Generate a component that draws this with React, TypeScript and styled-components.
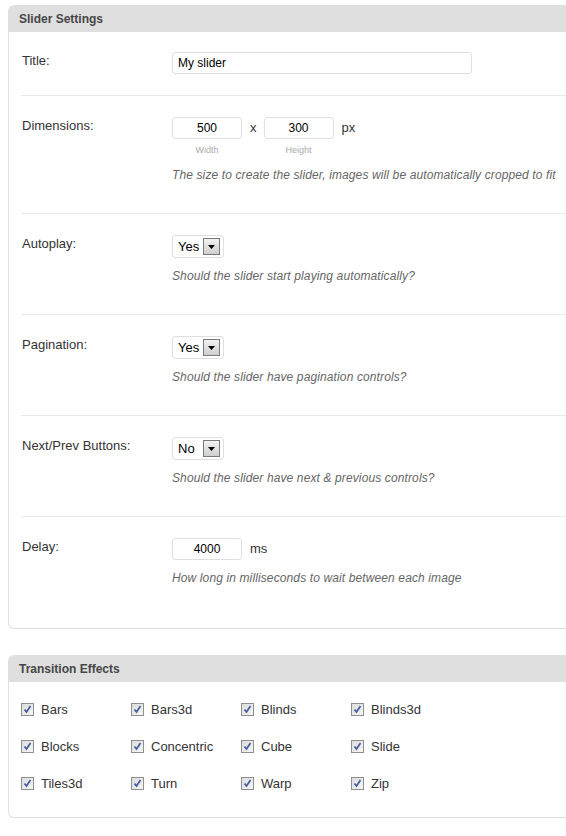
import React from 'react'
import styled, { createGlobalStyle } from 'styled-components'

const GlobalStyle = createGlobalStyle`
  html, body {
    margin: 0;
    background: #fff;
  }
  body {
    padding: 5px 0 0 8px;
    font-family: "Liberation Sans", Arial, sans-serif;
    font-size: 13px;
    color: #333;
    overflow: hidden;
  }
`

const Panel = styled.div`
  width: 600px;
  border: 1px solid #dfdfdf;
  border-right: none;
  border-radius: 6px 0 0 6px;
  background: #fff;
  margin-bottom: 26px;
`

const PanelHeader = styled.h3`
  margin: 0;
  height: 26px;
  line-height: 26px;
  padding: 0 10px;
  background: #dfdfdf;
  border-radius: 5px 0 0 0;
  font-size: 12px;
  font-weight: bold;
  color: #464646;
`

const PanelBody = styled.div<{ $pad?: string }>`
  padding: ${({ $pad }) => $pad || '0 0 12px 12px'};
`

const Row = styled.div<{ $first?: boolean }>`
  display: flex;
  padding: ${({ $first }) => ($first ? '20px 0 21px' : '21px 0 20px')};
  border-top: ${({ $first }) => ($first ? 'none' : '1px solid #e8e8e8')};
`

const Label = styled.div`
  width: 150px;
  flex-shrink: 0;
  padding: 1px 0 0 1px;
  line-height: 15px;
  font-size: 13px;
  color: #333;
`

const Field = styled.div`
  flex: 1;
`

const Controls = styled.div`
  display: flex;
  align-items: flex-start;
  gap: 7px;
`

const TextInput = styled.input<{ $w: number; $center?: boolean }>`
  box-sizing: border-box;
  width: ${({ $w }) => $w}px;
  height: 22px;
  border: 1px solid #dfdfdf;
  border-radius: 3px;
  padding: 0 5px;
  font: 12px "Liberation Sans", Arial, sans-serif;
  color: #000;
  text-align: ${({ $center }) => ($center ? 'center' : 'left')};
  outline: none;
  background: #fff;
`

const Stack = styled.div`
  display: flex;
  flex-direction: column;
  align-items: center;
`

const SubLabel = styled.div`
  font-size: 9px;
  color: #aaa;
  margin-top: 4px;
  line-height: 14px;
`

const Unit = styled.span`
  line-height: 22px;
  font-size: 13px;
  color: #333;
  margin-left: 1px;
`

const Description = styled.p`
  margin: 10px 0 10px;
  font-size: 12px;
  font-style: italic;
  color: #666;
  line-height: 16px;
  letter-spacing: 0.12px;
  white-space: nowrap;
`

const SelectBox = styled.div`
  box-sizing: border-box;
  display: inline-flex;
  align-items: center;
  justify-content: space-between;
  width: 52px;
  height: 23px;
  border: 1px solid #dfdfdf;
  border-radius: 3px;
  padding: 0 3px 0 5px;
  font-size: 13px;
  color: #000;
  background: #fff;
`

const ArrowButton = styled.span`
  box-sizing: border-box;
  width: 17px;
  height: 17px;
  border: 1px solid #7a7a7a;
  background: linear-gradient(#f2f2f2, #cfcfcf);
  display: flex;
  align-items: center;
  justify-content: center;
`

const Grid = styled.div`
  display: grid;
  grid-template-columns: repeat(4, 110px);
  row-gap: 22px;
  padding: 20px 0 26px 0;
`

const CheckItem = styled.label`
  display: flex;
  align-items: center;
  gap: 7px;
  line-height: 15px;
  font-size: 13px;
  color: #333;
`

const Box = styled.span`
  box-sizing: border-box;
  width: 13px;
  height: 13px;
  border: 1px solid #8e8f8f;
  background: linear-gradient(135deg, #dcdcdc, #f6f6f6);
  display: flex;
  align-items: center;
  justify-content: center;
`

const Select = ({ value }: { value: string }) => (
  <SelectBox>
    <span>{value}</span>
    <ArrowButton>
      <svg width="7" height="4" viewBox="0 0 7 4">
        <path d="M0 0h7L3.5 4z" fill="#000" />
      </svg>
    </ArrowButton>
  </SelectBox>
)

const Check = ({ label }: { label: string }) => (
  <CheckItem>
    <Box>
      <svg width="9" height="9" viewBox="0 0 9 9">
        <path d="M1.5 4.5l2 2.5 4-6" fill="none" stroke="#4b5fa0" strokeWidth="1.8" />
      </svg>
    </Box>
    <span>{label}</span>
  </CheckItem>
)

const effects = [
  'Bars', 'Bars3d', 'Blinds', 'Blinds3d',
  'Blocks', 'Concentric', 'Cube', 'Slide',
  'Tiles3d', 'Turn', 'Warp', 'Zip',
]

const App = () => (
  <>
    <GlobalStyle />
    <Panel>
      <PanelHeader>Slider Settings</PanelHeader>
      <PanelBody>
        <Row $first>
          <Label>Title:</Label>
          <Field>
            <TextInput $w={300} defaultValue="My slider" />
          </Field>
        </Row>
        <Row>
          <Label>Dimensions:</Label>
          <Field>
            <Controls>
              <Stack>
                <TextInput $w={70} $center defaultValue="500" />
                <SubLabel>Width</SubLabel>
              </Stack>
              <Unit>x</Unit>
              <Stack>
                <TextInput $w={70} $center defaultValue="300" />
                <SubLabel>Height</SubLabel>
              </Stack>
              <Unit>px</Unit>
            </Controls>
            <Description>The size to create the slider, images will be automatically cropped to fit</Description>
          </Field>
        </Row>
        <Row>
          <Label>Autoplay:</Label>
          <Field>
            <Select value="Yes" />
            <Description>Should the slider start playing automatically?</Description>
          </Field>
        </Row>
        <Row>
          <Label>Pagination:</Label>
          <Field>
            <Select value="Yes" />
            <Description>Should the slider have pagination controls?</Description>
          </Field>
        </Row>
        <Row>
          <Label>Next/Prev Buttons:</Label>
          <Field>
            <Select value="No" />
            <Description>Should the slider have next &amp; previous controls?</Description>
          </Field>
        </Row>
        <Row>
          <Label>Delay:</Label>
          <Field>
            <Controls>
              <TextInput $w={70} $center defaultValue="4000" />
              <Unit>ms</Unit>
            </Controls>
            <Description>How long in milliseconds to wait between each image</Description>
          </Field>
        </Row>
      </PanelBody>
    </Panel>
    <Panel>
      <PanelHeader>Transition Effects</PanelHeader>
      <PanelBody $pad="0 0 0 12px">
        <Grid>
          {effects.map((e) => (
            <Check key={e} label={e} />
          ))}
        </Grid>
      </PanelBody>
    </Panel>
  </>
)

export default App
